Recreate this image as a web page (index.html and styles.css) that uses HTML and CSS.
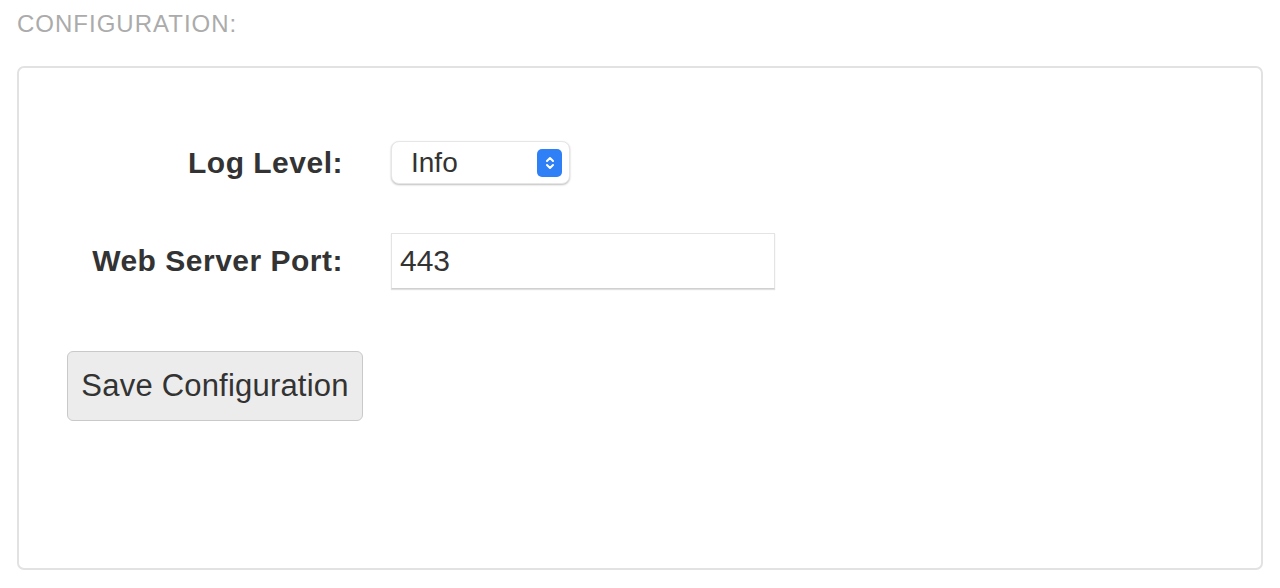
FILE: index.html
```html
<!DOCTYPE html>
<html>
<head>
  <meta charset="utf-8">
  <link rel="stylesheet" href="styles.css">
  <title>Configuration</title>
</head>
<body>
  <div class="page">
    <h4 class="section-title">CONFIGURATION:</h4>
    <div class="panel">
      <form class="config-form">
        <label class="field-label" for="log-level">Log Level:</label>
        <div class="select-wrap">
          <select id="log-level" class="select">
            <option>Info</option>
            <option>Debug</option>
            <option>Warning</option>
            <option>Error</option>
          </select>
          <span class="select-arrow">
            <svg width="12" height="18" viewBox="0 0 12 18"><path d="M3 7 L6 4 L9 7 M3 11 L6 14 L9 11" fill="none" stroke="#fff" stroke-width="2" stroke-linecap="round" stroke-linejoin="round"/></svg>
          </span>
        </div>

        <label class="field-label" for="port">Web Server Port:</label>
        <div><input id="port" class="text-input" type="text" value="443"></div>

        <div class="actions">
          <button type="button" class="btn">Save Configuration</button>
        </div>
      </form>
    </div>
  </div>
</body>
</html>
```

FILE: styles.css
```css
html, body { margin: 0; padding: 0; }
body {
  background: #fff;
  color: #333;
  font-family: "Liberation Sans", Arial, Helvetica, sans-serif;
}

.page { padding: 0 17px; }

.section-title {
  margin: 0;
  padding-top: 10px;
  font-size: 24px;
  line-height: 28px;
  font-weight: normal;
  letter-spacing: 1px;
  color: #ababab;
}

.panel {
  margin-top: 28px;
  border: 2px solid #e2e2e2;
  border-radius: 7px;
  padding: 73px 48px 147px 48px;
}

.config-form {
  display: grid;
  grid-template-columns: 276px auto;
  column-gap: 48px;
  align-items: center;
}

.field-label {
  text-align: right;
  font-weight: bold;
  font-size: 30px;
  letter-spacing: 0.5px;
  color: #333;
}

.select-wrap {
  position: relative;
  width: 179px;
  height: 43px;
}
.select {
  -webkit-appearance: none;
  appearance: none;
  width: 179px;
  height: 43px;
  border: 1px solid #e6e6e6;
  border-radius: 8px;
  background: #fff;
  box-shadow: 0 1px 2px rgba(0,0,0,0.25);
  padding: 0 0 0 19px;
  font-family: "Liberation Sans", Arial, sans-serif;
  font-size: 28px;
  color: #333;
  outline: none;
}
.select-arrow {
  position: absolute;
  top: 8px;
  right: 8px;
  width: 25px;
  height: 28px;
  border-radius: 5px;
  background: #2f80f7;
  display: flex;
  align-items: center;
  justify-content: center;
  pointer-events: none;
}

.text-input {
  display: block;
  box-sizing: border-box;
  width: 384px;
  height: 56px;
  margin-top: 49px;
  margin-bottom: 0;
  border: 1px solid #e4e4e4;
  border-bottom-color: #d0d0d0;
  box-shadow: 0 1px 1px rgba(0,0,0,0.12);
  padding: 0 8px;
  font-family: "Liberation Sans", Arial, sans-serif;
  font-size: 30px;
  color: #333;
  outline: none;
}
.field-label[for="port"] { margin-top: 49px; }

.actions {
  grid-column: 1 / 3;
  margin-top: 62px;
}
.btn {
  width: 296px;
  height: 70px;
  background: #ececec;
  border: 1px solid #c9c9c9;
  border-radius: 6px;
  font-family: "Liberation Sans", Arial, sans-serif;
  font-size: 31px;
  letter-spacing: 0.2px;
  color: #333;
  padding: 0;
}
```
